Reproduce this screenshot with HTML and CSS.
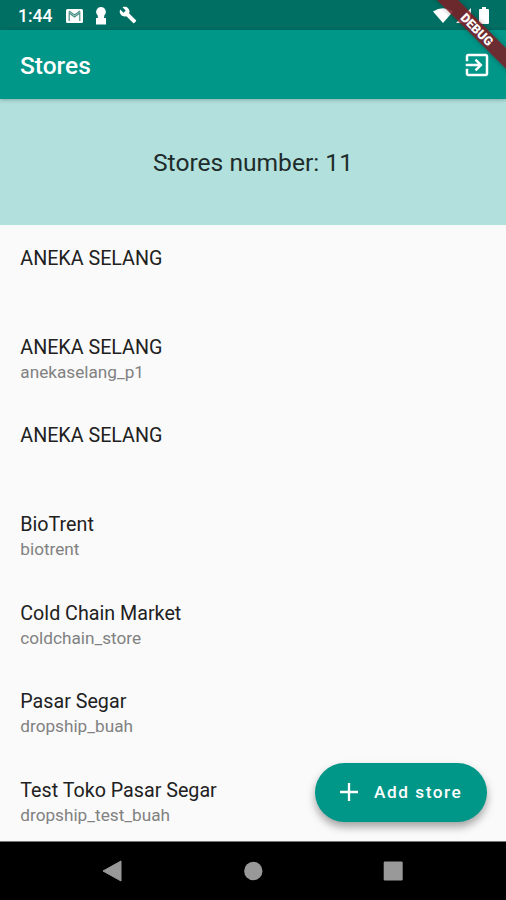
FILE: index.html
```html
<!DOCTYPE html>
<html lang="en">
<head>
<meta charset="utf-8">
<title>Stores</title>
<link rel="stylesheet" href="styles.css">
</head>
<body>
<div class="phone">
  <header class="status">
    <span class="clock">1:44</span>
    <svg class="mail" viewBox="0 0 17 14"><rect width="17" height="14" rx="1.500" fill="#fff"/><path d="M3.200 12V4L8.500 8l5.300-4V12M3 2L8.500 5.900 14 2" fill="none" stroke="#4a9288" stroke-width="1.200"/></svg>
    <svg class="keyhole" viewBox="0 0 10 18"><path d="M5 0a4.800 4.800 0 0 0-3.400 8.200L2 11H0v6.500h10V11H8L8.400 8.200A4.800 4.800 0 0 0 5 0z" fill="#fff"/></svg>
    <svg class="wrench" viewBox="0 0 24 24"><path d="M22.700 19l-9.100-9.100c.9-2.300.4-5-1.500-6.900-2-2-5-2.400-7.400-1.300L9 6 6 9 1.600 4.700C.4 7.100.9 10.100 2.900 12.100c1.900 1.900 4.600 2.400 6.900 1.500l9.100 9.100c.4.4 1 .4 1.400 0l2.300-2.300c.5-.4.5-1.100.1-1.400z" fill="#fff"/></svg>
    <span class="grow"></span>
    <svg class="wifi" viewBox="0 0 20 15"><path d="M0 3.500Q10-3 20 3.500L10 15z" fill="#fff"/></svg>
    <svg class="signal" viewBox="0 0 15 15"><path d="M0 15L15 0V15z" fill="#fff"/></svg>
    <svg class="battery" viewBox="0 0 10 17"><path d="M3 0h4v2h2q1 0 1 1v13q0 1-1 1H1q-1 0-1-1V3q0-1 1-1h2z" fill="#fff"/></svg>
  </header>
  <div class="appbar">
    <h1>Stores</h1>
    <svg class="exit" viewBox="0 0 24 24"><path d="M10.090 15.590L11.500 17l5-5-5-5-1.410 1.410L12.670 11H3v2h9.670l-2.580 2.590zM19 3H5c-1.110 0-2 .9-2 2v4h2V5h14v14H5v-4H3v4c0 1.100.89 2 2 2h14c1.100 0 2-.9 2-2V5c0-1.100-.9-2-2-2z" fill="#fff"/></svg>
  </div>
  <section class="summary">Stores number: 11</section>
  <main class="list">
    <div class="row"><div class="name">ANEKA SELANG</div></div>
    <div class="row"><div class="name">ANEKA SELANG</div><div class="slug">anekaselang_p1</div></div>
    <div class="row"><div class="name">ANEKA SELANG</div></div>
    <div class="row"><div class="name">BioTrent</div><div class="slug">biotrent</div></div>
    <div class="row"><div class="name">Cold Chain Market</div><div class="slug">coldchain_store</div></div>
    <div class="row"><div class="name">Pasar Segar</div><div class="slug">dropship_buah</div></div>
    <div class="row"><div class="name">Test Toko Pasar Segar</div><div class="slug">dropship_test_buah</div></div>
  </main>
  <nav class="nav">
    <svg viewBox="0 0 20 22"><path d="M0 11L18 1V21z" fill="#999" stroke="#999" stroke-linejoin="round"/></svg>
    <svg viewBox="0 0 20 22"><circle cx="10.300" cy="11" r="9.200" fill="#999"/></svg>
    <svg viewBox="0 0 20 22"><rect x=".7" y="1.500" width="19" height="19" rx="1.200" fill="#999"/></svg>
  </nav>
  <button class="fab"><svg viewBox="0 0 18 18"><path d="M9 0v18M0 9h18" stroke="#fff" stroke-width="2.300"/></svg><span>Add store</span></button>
  <div class="ribbon">DEBUG</div>
</div>
</body>
</html>
```
FILE: styles.css
```css
* { box-sizing: border-box; }
body { margin: 0; font-family: Roboto, sans-serif; }
.phone { position: relative; width: 506px; height: 900px; overflow: hidden; display: flex; flex-direction: column; background: #fafafa; }
.status { height: 30px; flex: none; display: flex; align-items: center; padding: 1px 16px 0 18px; background: #006f63; color: #fff; }
.clock { font-size: 17.5px; font-weight: 500; width: 34px; white-space: nowrap; }
.mail { width: 17px; height: 14px; margin-left: 13.5px; }
.keyhole { width: 10px; height: 18px; margin-left: 13.5px; }
.wrench { width: 18px; height: 18px; margin: 0 0 1px 13px; }
.grow { flex: 1; }
.wifi { width: 20px; height: 15px; margin-bottom: 1px; }
.signal { width: 15px; height: 15px; margin-left: 3px; }
.battery { width: 10px; height: 17px; margin: 0 1px 1px 8px; }
.appbar { position: relative; z-index: 1; height: 69px; flex: none; display: flex; align-items: center; justify-content: space-between; padding: 0 14px 0 20px; background: #009688; box-shadow: 0 1px 4px rgba(0, 0, 0, .25); }
h1 { margin: 0; padding-top: 2px; color: #fff; font-size: 24.5px; font-weight: 500; line-height: 30px; }
.exit { width: 30px; height: 30px; }
.summary { height: 126px; flex: none; padding-top: 1px; display: flex; align-items: center; justify-content: center; background: #b2e0dc; color: #202c2b; font-size: 24.6px; }
.list { flex: 1; overflow: hidden; }
.row { height: 88.65px; padding: 21px 20px 0 20.3px; }
.name { color: #212121; font-size: 19.7px; line-height: 26px; }
.slug { color: #818181; font-size: 17.2px; line-height: 23px; }
.nav { height: 59px; flex: none; display: flex; align-items: center; justify-content: center; gap: 120px; background: #000; border-top: 1px solid #777; }
.nav svg { width: 20px; height: 22px; }
.fab { position: absolute; left: 315px; top: 763px; width: 172px; height: 59px; border: 0; border-radius: 30px; padding: 0 0 1px 25px; display: flex; align-items: center; gap: 16px; background: #009688; color: #fff; font: 500 17.2px Roboto, sans-serif; letter-spacing: 1.55px; box-shadow: 0 5px 9px rgba(0, 0, 0, .35); }
.fab svg { width: 18px; height: 18px; }
.ribbon { position: absolute; z-index: 2; left: 417px; top: 21.5px; width: 120px; height: 15px; transform: rotate(45deg); background: rgba(122, 31, 37, .88); color: #fff; font-size: 12.5px; line-height: 15px; font-weight: 900; text-align: center; box-shadow: 0 0 5px rgba(0, 0, 0, .3); }
```
